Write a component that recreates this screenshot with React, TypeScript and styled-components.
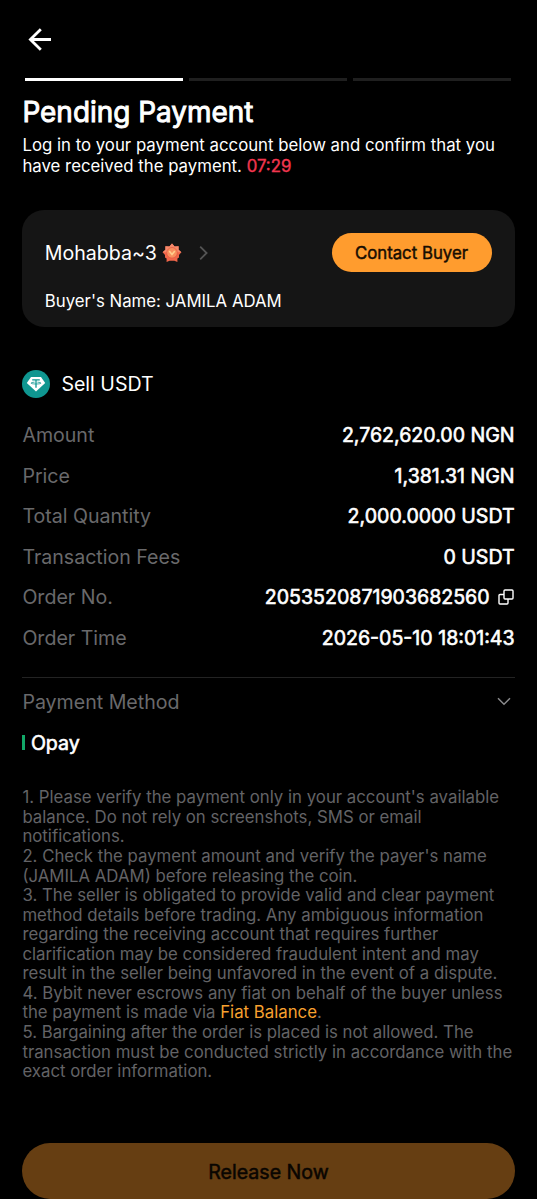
import React from "react";
import styled, { createGlobalStyle } from "styled-components";

const GlobalStyle = createGlobalStyle`
  * { box-sizing: border-box; }
  html, body { margin: 0; background: #000; }
  body {
    font-family: Inter, "Noto Sans", sans-serif;
    font-weight: 400;
    color: #fff;
    overflow: hidden;
  }
`;

const Screen = styled.main`
  width: 537px;
  height: 1199px;
  padding: 0 22.4px;
  display: flex;
  flex-direction: column;
  overflow: hidden;
  background: #000;
`;

const Text = styled.span<{ $size?: number; $bold?: number; $color?: string }>`
  font-size: ${(p) => p.$size ?? 19.58}px;
  color: ${(p) => p.$color ?? "#fff"};
  -webkit-text-stroke: ${(p) => p.$bold ?? 0}px currentColor;
  white-space: nowrap;
`;

const TopBar = styled.header`
  height: 78px;
  padding: 27px 0 0 4.6px;
  flex: none;
  svg { display: block; }
`;

const Steps = styled.div`
  display: flex;
  gap: 6.5px;
  padding: 0 3.4px 0 2.6px;
  flex: none;
`;

const Step = styled.div<{ $active?: boolean }>`
  flex: 1;
  height: 3px;
  background: ${(p) => (p.$active ? "#fff" : "#1f1f1f")};
`;

const Title = styled.h1`
  margin: 13px 0 0;
  font-size: 27.95px;
  font-weight: 400;
  line-height: 36px;
  -webkit-text-stroke: 0.9px #fff;
  flex: none;
`;

const Intro = styled.p`
  margin: 5px 0 0;
  font-size: 16.8px;
  line-height: 21px;
  white-space: nowrap;
  flex: none;
`;

const Timer = styled.span`
  color: #f2364f;
  -webkit-text-stroke: 0.4px #f2364f;
`;

const Card = styled.section`
  margin-top: 33px;
  height: 117px;
  border-radius: 22px;
  background: #151515;
  padding: 23px 22.4px 0;
  flex: none;
`;

const CardTop = styled.div`
  display: flex;
  align-items: center;
  height: 39px;
`;

const BadgeSvg = styled.svg`
  margin: 0 0 0 5px;
`;

const ChevronSvg = styled.svg`
  margin: 0 0 0 17px;
`;

const ContactButton = styled.button`
  margin-left: auto;
  width: 160.5px;
  height: 39px;
  border: 0;
  border-radius: 20px;
  padding: 0 1px 0 0;
  background: #ff9c2e;
  color: #170d02;
  font: 400 16.8px Inter, sans-serif;
  -webkit-text-stroke: 0.45px currentColor;
`;

const BuyerName = styled.div`
  margin-top: 19px;
  line-height: 20px;
  display: flex;
`;

const SellRow = styled.div`
  margin-top: 43px;
  height: 28px;
  display: flex;
  align-items: center;
  gap: 11px;
  flex: none;
`;

const Details = styled.dl`
  margin: 17px 0 0;
  padding-bottom: 19px;
  border-bottom: 1px solid #232323;
  flex: none;
`;

const Row = styled.div`
  height: 40.55px;
  display: flex;
  align-items: center;
  justify-content: space-between;
`;

const Value = styled.dd`
  margin: 0;
  display: flex;
  align-items: center;
  gap: 8px;
  svg { margin: 0 1px 1px 0; }
`;

const Method = styled.div`
  height: 48px;
  display: flex;
  align-items: center;
  justify-content: space-between;
  padding-right: 4px;
  flex: none;
  svg { margin-bottom: 1px; }
`;

const Account = styled.div`
  height: 33px;
  display: flex;
  align-items: center;
  gap: 5.5px;
  flex: none;
`;

const Marker = styled.div`
  width: 3px;
  height: 15px;
  background: #12a868;
`;

const Notes = styled.p`
  margin: 29px 0 0;
  font-size: 16.8px;
  line-height: 19.56px;
  color: #636366;
  white-space: nowrap;
  flex: none;
`;

const Link = styled.span`
  color: #f7a12f;
`;

const ReleaseButton = styled.button`
  margin-top: 61.6px;
  height: 56px;
  width: 100%;
  border: 0;
  padding: 1px 0 0;
  border-radius: 28px;
  background: #663e12;
  color: #090501;
  font: 400 19.58px Inter, sans-serif;
  -webkit-text-stroke: 0.5px currentColor;
  flex: none;
`;

const grey = "#69696b";

const details: { label: string; value: string; copy?: boolean }[] = [
  { label: "Amount", value: "2,762,620.00 NGN" },
  { label: "Price", value: "1,381.31 NGN" },
  { label: "Total Quantity", value: "2,000.0000 USDT" },
  { label: "Transaction Fees", value: "0 USDT" },
  { label: "Order No.", value: "2053520871903682560", copy: true },
  { label: "Order Time", value: "2026-05-10 18:01:43" },
];

const notes = [
  "1. Please verify the payment only in your account's available",
  "balance. Do not rely on screenshots, SMS or email",
  "notifications.",
  "2. Check the payment amount and verify the payer's name",
  "(JAMILA ADAM) before releasing the coin.",
  "3. The seller is obligated to provide valid and clear payment",
  "method details before trading. Any ambiguous information",
  "regarding the receiving account that requires further",
  "clarification may be considered fraudulent intent and may",
  "result in the seller being unfavored in the event of a dispute.",
  "4. Bybit never escrows any fiat on behalf of the buyer unless",
];

const BackIcon = () => (
  <svg width="26" height="26" viewBox="0 0 26 26" fill="none" stroke="#fff" strokeWidth="2.8">
    <path d="M13.8 2.2 3.4 12.5 13.8 22.8M3.4 12.5H24" />
  </svg>
);

const BadgeIcon = () => (
  <BadgeSvg width="20" height="20" viewBox="0 0 20 20">
    <path
      d="M10 .6 12.6 3.4 16.6 3.2 16.6 6.8 19.4 9.2 17 12 17 14.6 15.4 15.6V19L12.4 17.8H7.6L4.6 19V15.6L3 14.6V12L.6 9.2 3.4 6.8 3.4 3.2 7.4 3.4Z"
      fill="#f0664a"
    />
    <path d="M10 .6 12.6 3.4 16.6 3.2V6.8L19.4 9.2H.6L3.4 6.8V3.2L7.4 3.4Z" fill="#f58a6c" />
    <circle cx="10" cy="9.8" r="5.3" fill="#f98f5e" stroke="#e2573f" strokeWidth=".7" />
    <path d="M7.2 7.9 10 11.4 12.8 7.9" fill="none" stroke="#ffcf8e" strokeWidth="1.6" />
  </BadgeSvg>
);

const ChevronRight = () => (
  <ChevronSvg width="10" height="16" viewBox="0 0 10 16" fill="none" stroke="#545454" strokeWidth="1.8">
    <path d="M1.2 1.7 7.6 8 1.2 14.3" />
  </ChevronSvg>
);

const TetherIcon = () => (
  <svg width="28" height="28" viewBox="0 0 28 28">
    <circle cx="14" cy="14" r="14" fill="#0f9690" />
    <path d="M9 7H19L23.2 13 14 21.6 4.8 13Z" fill="#fff" />
    <g fill="none" stroke="#0f9690">
      <path d="M10.2 9.9H17.8M14 9.9V17.8" strokeWidth="1.3" />
      <path d="M12.6 12.2C7.6 12.4 7.6 14 14 14S20.4 12.4 15.4 12.2" strokeWidth=".8" />
    </g>
  </svg>
);

const CopyIcon = () => (
  <svg width="16" height="16" viewBox="0 0 16 16" fill="none" stroke="#fff" strokeWidth="1.4">
    <rect x="6" y="1" width="9" height="9" rx="1" />
    <path d="M6 5.5H2a1 1 0 0 0-1 1V14a1 1 0 0 0 1 1H9a1 1 0 0 0 1-1V10" />
  </svg>
);

const ChevronDown = () => (
  <svg width="14" height="9" viewBox="0 0 14 9" fill="none" stroke="#8a8a8c" strokeWidth="1.5">
    <path d="M1 1.2 7 7.2 13 1.2" />
  </svg>
);

export default function App() {
  return (
    <>
      <GlobalStyle />
      <Screen>
        <TopBar>
          <BackIcon />
        </TopBar>
        <Steps>
          <Step $active />
          <Step />
          <Step />
        </Steps>
        <Title>Pending Payment</Title>
        <Intro>
          Log in to your payment account below and confirm that you
          <br />
          have received the payment. <Timer>07:29</Timer>
        </Intro>
        <Card>
          <CardTop>
            <Text>Mohabba~3</Text>
            <BadgeIcon />
            <ChevronRight />
            <ContactButton>Contact Buyer</ContactButton>
          </CardTop>
          <BuyerName>
            <Text $size={16.8}>Buyer's Name: JAMILA ADAM</Text>
          </BuyerName>
        </Card>
        <SellRow>
          <TetherIcon />
          <Text>Sell USDT</Text>
        </SellRow>
        <Details>
          {details.map((d) => (
            <Row key={d.label}>
              <Text as="dt" $color={grey}>{d.label}</Text>
              <Value>
                <Text $bold={0.6}>{d.value}</Text>
                {d.copy && <CopyIcon />}
              </Value>
            </Row>
          ))}
        </Details>
        <Method>
          <Text $color={grey}>Payment Method</Text>
          <ChevronDown />
        </Method>
        <Account>
          <Marker />
          <Text $bold={0.6}>Opay</Text>
        </Account>
        <Notes>
          {notes.map((line) => (
            <React.Fragment key={line}>
              {line}
              <br />
            </React.Fragment>
          ))}
          the payment is made via <Link>Fiat Balance</Link>.
          <br />
          5. Bargaining after the order is placed is not allowed. The
          <br />
          transaction must be conducted strictly in accordance with the
          <br />
          exact order information.
        </Notes>
        <ReleaseButton>Release Now</ReleaseButton>
      </Screen>
    </>
  );
}
